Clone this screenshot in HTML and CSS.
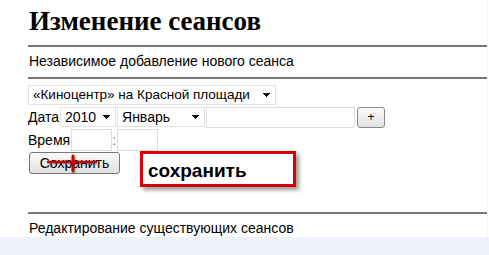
FILE: index.html
```html
<!DOCTYPE html>
<html lang="ru">
<head>
    <meta charset="UTF-8">
    <title>Изменение сеансов</title>
    <link rel="stylesheet" href="styles.css">
</head>
<body>
    <div id="page">
        <h1>Изменение сеансов</h1>
        <div class="section-title">Независимое добавление нового сеанса</div>
        <form id="add-form">
            <div class="row first">
                <select class="cinema">
                    <option>«Киноцентр» на Красной площади</option>
                </select>
            </div>
            <div class="row">
                Дата<select class="year"><option>2010</option></select><select class="month"><option>Январь</option></select><input type="text" class="day"><button type="button" class="plus">+</button>
            </div>
            <div class="row">
                Время<input type="text" class="time"><span class="colon">:</span><input type="text" class="time">
            </div>
            <div class="row save-row">
                <button type="button" class="save">Сохранить</button>
                <svg class="mark" width="60" height="24" viewBox="0 0 60 24">
                    <path d="M4 10 H52" stroke="#c80000" stroke-width="2.5" stroke-linecap="round" fill="none"/>
                    <path d="M29 4 V19" stroke="#c80000" stroke-width="3" stroke-linecap="round" fill="none"/>
                </svg>
                <div class="callout">сохранить</div>
            </div>
        </form>
        <div class="section-title">Редактирование существующих сеансов</div>
    </div>
    <div id="statusbar"></div>
</body>
</html>
```
FILE: styles.css
```css
*{
    margin: 0;
    padding: 0;
    box-sizing: border-box;
}
body{
    background: #fff;
    font-family: "Liberation Sans", Arial, sans-serif;
    font-size: 14px;
    color: #000;
    overflow: hidden;
}
#page{
    width: 488px;
    padding: 6px 0 0 28px;
    border-right: 1px solid #f4f7fb;
    height: 255px;
}
h1{
    font-family: "Liberation Serif", "Times New Roman", serif;
    font-size: 27px;
    font-weight: bold;
    line-height: 30px;
    padding-left: 1px;
    margin-bottom: 9px;
}
.section-title{
    border-top: 2px solid #777;
    padding: 6px 0 8px 1px;
    line-height: 16px;
}
#add-form{
    border-top: 2px solid #777;
    padding-top: 5px;
    height: 135px;
}
.row{
    display: flex;
    align-items: center;
    height: 22px;
    margin-bottom: 1px;
    line-height: 16px;
}
.row.first{
    height: 21px;
}
select, input, button{
    font-family: "Liberation Sans", Arial, sans-serif;
    font-size: 14px;
    height: 20px;
    color: #000;
}
select{
    -webkit-appearance: none;
    appearance: none;
    border: 1px solid #e3e3e3;
    border-radius: 0;
    padding: 0 0 0 4px;
    background-color: #fff;
    background-image: linear-gradient(45deg, transparent 50%, #000 50%), linear-gradient(135deg, #000 50%, transparent 50%);
    background-size: 4px 4px, 4px 4px;
    background-repeat: no-repeat;
    background-position: right 8px center, right 4px center;
}
.cinema{
    width: 248px;
    font-size: 13.5px;
}
.year{
    width: 56px;
    margin-left: 1px;
}
.month{
    width: 88px;
    margin-left: 1px;
}
.day{
    width: 149px;
    margin-left: 1px;
    border: 1px solid #ddd;
    height: 21px;
}
.plus{
    width: 28px;
    height: 21px;
    margin-left: 2px;
    border: 1px solid #888;
    border-radius: 3px;
    background: linear-gradient(#fbfbfb, #e2e2e2);
    font-size: 12px;
}
.time{
    width: 41px;
    height: 22px;
    border: 1px solid #ddd;
    margin-left: 1px;
}
.colon{
    width: 4px;
    color: #777;
}
.save-row{
    position: relative;
    align-items: flex-start;
}
.save{
    width: 91px;
    height: 22px;
    margin-left: 1px;
    border: 1px solid #777;
    border-radius: 3px;
    background: linear-gradient(#fbfbfb, #e0e0e0);
}
.mark{
    position: absolute;
    left: 16px;
    top: 0;
    filter: drop-shadow(1px 1px 1px rgba(0,0,0,.35));
}
.callout{
    margin-left: 20px;
    width: 156px;
    height: 36px;
    margin-top: -1px;
    border: 3px solid #d80000;
    box-shadow: 3px 3px 4px rgba(0,0,0,.4);
    font-size: 19px;
    font-weight: bold;
    padding: 6px 0 0 5px;
    line-height: 22px;
}
#statusbar{
    position: fixed;
    left: 0;
    right: 0;
    bottom: 0;
    height: 18px;
    background: #eef2f9;
}
```
